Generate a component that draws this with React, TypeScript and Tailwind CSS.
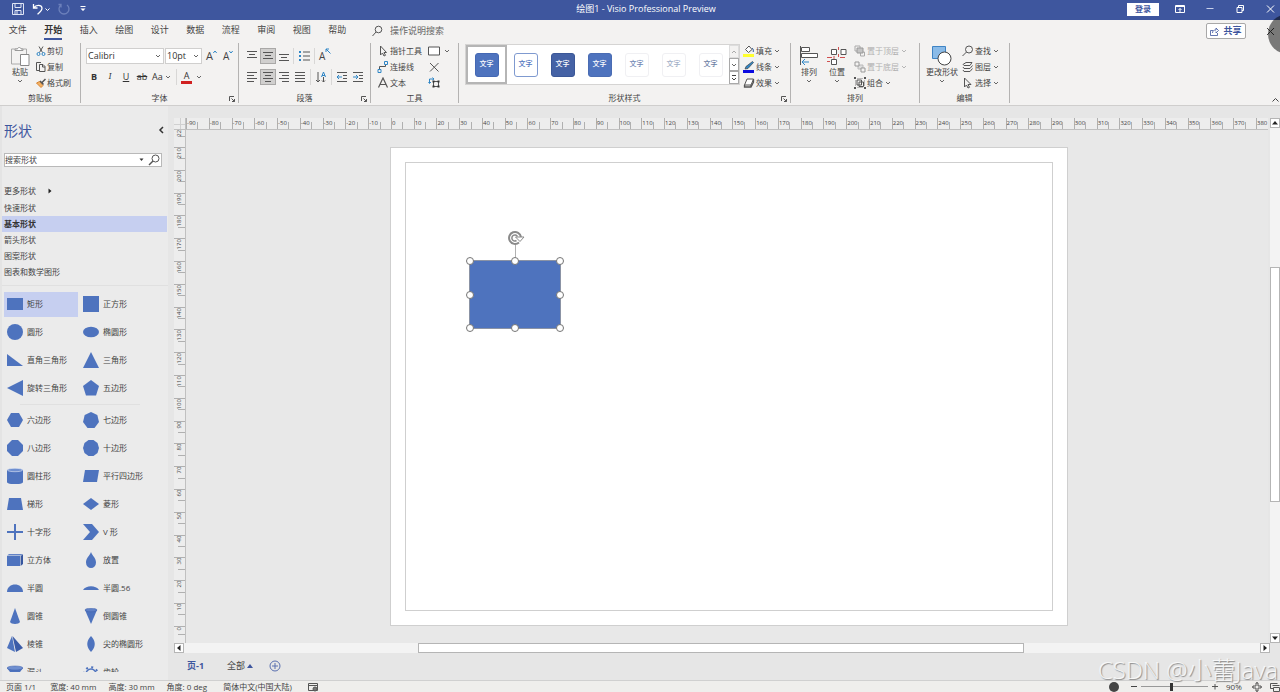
import React, { useState } from "react";
import clsx from "clsx";

const BLUE = "#4e73be";

const tabs = ["文件", "开始", "插入", "绘图", "设计", "数据", "流程", "审阅", "视图", "帮助"];

const stencils = ["快速形状", "基本形状", "箭头形状", "图案形状", "图表和数学图形"];

const swatches = [
  "bg-[#4e73be] text-white border-[#4468b4]",
  "bg-white text-[#4e73be] border-[#7f9ad0]",
  "bg-[#4562a5] text-white border-[#3b5797]",
  "bg-[#4e73be] text-white border-[#4a6cb3]",
  "bg-white text-[#6f86b4] border-[#f0f0f3]",
  "bg-white text-[#a0adc5] border-[#f0f0f3]",
  "bg-white text-[#6a7ca3] border-[#f0f0f3]",
];

type Shape = { name: string; art: React.ReactNode };

const mainShapes: Shape[] = [
  { name: "矩形", art: <path d="M0 2h16v12H0z" /> },
  { name: "正方形", art: <path d="M0 0h16v16H0z" /> },
  { name: "圆形", art: <circle cx="8" cy="8" r="8" /> },
  { name: "椭圆形", art: <ellipse cx="8" cy="8" rx="8" ry="5.3" /> },
  { name: "直角三角形", art: <path d="M0 2l16 12H0z" /> },
  { name: "三角形", art: <path d="M8 0l8 16H0z" /> },
  { name: "旋转三角形", art: <path d="M16 0v16L0 8z" /> },
  { name: "五边形", art: <path d="M8 0l8 6-3 9.500H3L0 6z" /> },
];

const moreShapes: Shape[] = [
  { name: "六边形", art: <path d="M4 1h8l4 7-4 7H4L0 8z" /> },
  { name: "七边形", art: <path d="M8 0l6.300 3L16 10l-4.500 6h-7L0 10l1.700-7z" /> },
  { name: "八边形", art: <path d="M5 0h6l5 5v6l-5 5H5l-5-5V5z" /> },
  { name: "十边形", art: <path d="M5.500 0h5L14.500 3 16 8l-1.500 5-4 3h-5l-4-3L0 8l1.500-5z" /> },
  {
    name: "圆柱形",
    art: (
      <>
        <path d="M0 2v12c0 3 16 3 16 0V2z" />
        <ellipse cx="8" cy="2" rx="7.700" ry="1.700" fill="#6f8fd0" stroke="#dfe5f3" strokeWidth=".6" />
      </>
    ),
  },
  { name: "平行四边形", art: <path d="M2 2h14l-2 12H0z" /> },
  { name: "梯形", art: <path d="M2 2h12l2 12H0z" /> },
  { name: "菱形", art: <path d="M8 2l8 6-8 6-8-6z" /> },
  { name: "十字形", art: <path d="M7 0h2v7h7v2H9v7H7V9H0V7h7z" /> },
  { name: "V 形", art: <path d="M0 0h9l7 8-7 8H0l7-8z" /> },
  {
    name: "立方体",
    art: (
      <>
        <path d="M0 4h13v10H0z" />
        <path d="M0 3.500L2 2h14l-2.500 1.500z" fill="#6383c6" />
        <path d="M13.600 4L16 2.300V12l-2.400 2z" fill="#36569f" />
      </>
    ),
  },
  { name: "放置", art: <path d="M8 0c1.500 4 5 6 5 10.500a5 5.500 0 0 1-10 0C3 6 6.500 4 8 0z" /> },
  { name: "半圆", art: <path d="M0 12c0-10 16-10 16 0z" /> },
  { name: "半圆.56", art: <path d="M0 10c3-5 13-5 16 0z" /> },
  { name: "圆锥", art: <path d="M8 0l5 14c-1 2.500-9 2.500-10 0z" /> },
  {
    name: "倒圆锥",
    art: (
      <>
        <path d="M2 2l6 14 6-14z" />
        <ellipse cx="8" cy="2" rx="6" ry="1.800" fill="#5f80c6" stroke="#3d5fab" strokeWidth=".5" />
      </>
    ),
  },
  {
    name: "棱锥",
    art: (
      <>
        <path d="M5 0L0 12l8 4z" />
        <path d="M5.500 0L9 16l7-4z" fill="#3b5ca8" />
      </>
    ),
  },
  { name: "尖的椭圆形", art: <path d="M8 0c5 5 5 11 0 16-5-5-5-11 0-16z" /> },
  {
    name: "漏斗",
    art: (
      <>
        <path d="M0 4l6 8h4l6-8z" />
        <ellipse cx="8" cy="4" rx="8" ry="2" fill="#6f8fd0" stroke="#3d5fab" strokeWidth=".5" />
      </>
    ),
  },
  {
    name: "齿轮",
    art: (
      <g fill="none" stroke={BLUE}>
        <circle cx="8" cy="10" r="5" strokeWidth="1.500" />
        <circle cx="8" cy="10" r="6.800" strokeWidth="2" strokeDasharray="2 3.340" />
      </g>
    ),
  },
];

function Svg({ size = 12, children }: { size?: number; children: React.ReactNode }) {
  return (
    <svg
      width={size}
      height={size}
      viewBox={`0 0 ${size} ${size}`}
      fill="none"
      stroke="#555"
      strokeWidth="1"
      className="shrink-0"
      aria-hidden="true"
    >
      {children}
    </svg>
  );
}

function Chevron({ light }: { light?: boolean }) {
  return (
    <svg width="6" height="6" viewBox="0 0 6 6" fill="none" stroke={light ? "#b5b5b5" : "#666"} className="shrink-0">
      <path d="M1 2l2 2 2-2" />
    </svg>
  );
}

function Divider() {
  return <span className="h-4 w-px bg-[#d8d7d6]" />;
}

function Group({
  label,
  className,
  launcher,
  children,
}: {
  label: string;
  className: string;
  launcher?: boolean;
  children: React.ReactNode;
}) {
  return (
    <section className={clsx("relative flex shrink-0 flex-col border-r border-[#b4b3b2]", className)}>
      <div className="flex h-12 shrink-0">{children}</div>
      <h2 className="text-center text-[8px] leading-[14px] text-[#444]">{label}</h2>
      {launcher && (
        <button aria-label={`${label}设置`} className="absolute right-0.5 bottom-0">
          <Svg size={8}>
            <path d="M1.500 6V1.500H6M3.500 3.500L6.500 6.500M6.500 4v2.500H4" />
          </Svg>
        </button>
      )}
    </section>
  );
}

function RowButton({
  icon,
  label,
  chevron,
  disabled,
}: {
  icon: React.ReactNode;
  label: string;
  chevron?: boolean;
  disabled?: boolean;
}) {
  return (
    <button
      disabled={disabled}
      className={clsx("flex h-4 items-center whitespace-nowrap", disabled ? "text-[#b0b0b0]" : "text-[#444]")}
    >
      {icon}
      <span className="ml-px">{label}</span>
      {chevron && (
        <span className="ml-0.5">
          <Chevron light={disabled} />
        </span>
      )}
    </button>
  );
}

function BigButton({ icon, label }: { icon: React.ReactNode; label: string }) {
  return (
    <button className="flex flex-col items-center whitespace-nowrap text-[#444]">
      {icon}
      <span className="leading-3">{label}</span>
      <Chevron />
    </button>
  );
}

function IconButton({ label, active, children }: { label: string; active?: boolean; children: React.ReactNode }) {
  return (
    <button
      aria-label={label}
      className={clsx("flex size-4 items-center justify-center", active && "border border-[#a9a8a7] bg-[#d0cfce]")}
    >
      {children}
    </button>
  );
}

// lines of text, each given as [x1, x2]
function Lines({ rows, top = 1 }: { rows: number[][]; top?: number }) {
  return (
    <Svg size={12}>
      {rows.map(([a, b], i) => (
        <path key={i} d={`M${a} ${top + 0.5 + i * 3}H${b}`} />
      ))}
    </Svg>
  );
}

function TitleBar() {
  return (
    <header className="flex h-5 shrink-0 items-center bg-[#3e569e] pb-0.5 text-[9px] text-white">
      <div className="flex flex-1 items-center pl-3">
        <button aria-label="保存">
          <svg width="12" height="12" viewBox="0 0 12 12" fill="none" stroke="#dfe5f5">
            <path d="M.5.500h11v11H.500zM3 .500v4h6v-4M3 11.500V7.500h6v4M5 8v3" />
          </svg>
        </button>
        <button aria-label="撤消" className="ml-2 flex items-center gap-px">
          <svg width="12" height="12" viewBox="0 0 12 12" fill="none" stroke="#fff" strokeWidth="1.300">
            <path d="M1.500 1v4h4M1.700 4.800C4 1.500 9.500 1.500 10 5c.2 2.500-2 4-4.500 6.200" />
          </svg>
          <svg width="5" height="5" viewBox="0 0 5 5" fill="none" stroke="#fff">
            <path d="M.5 1.500l2 2 2-2" />
          </svg>
        </button>
        <button aria-label="重复" className="ml-2">
          <svg width="12" height="12" viewBox="0 0 12 12" fill="none" stroke="#6c80bb" strokeWidth="1.300">
            <path d="M3 2a5 5 0 1 0 6 0M3 4.500V1.500H.500" />
          </svg>
        </button>
        <button aria-label="自定义快速访问工具栏" className="ml-2.5">
          <svg width="6" height="6" viewBox="0 0 6 6" fill="#fff">
            <path d="M.5 0h5v1h-5zM.5 2.500h5L3 5z" />
          </svg>
        </button>
      </div>
      <h1>绘图1 - Visio Professional Preview</h1>
      <div className="flex flex-1 items-center justify-end">
        <button className="h-[13px] w-8 bg-white text-[8px] leading-3 font-bold text-[#3e569e]">登录</button>
        <button aria-label="功能区显示选项" className="ml-4">
          <svg width="10" height="10" viewBox="0 0 10 10" fill="none" stroke="#fff">
            <path d="M.5 1.500h9v7h-9zM.5 2.500h9M5 8V4.500M3.500 6L5 4.500 6.500 6" />
          </svg>
        </button>
        <button aria-label="最小化" className="ml-5">
          <svg width="10" height="10" viewBox="0 0 10 10" stroke="#c9d1ea">
            <path d="M1.500 4.500h7" />
          </svg>
        </button>
        <button aria-label="还原" className="ml-5">
          <svg width="10" height="10" viewBox="0 0 10 10" fill="none" stroke="#fff">
            <path d="M2 3.500h5v5H2zM3.500 3.500v-2h5v5H7" />
          </svg>
        </button>
        <button aria-label="关闭" className="mr-[5px] ml-5">
          <svg width="10" height="10" viewBox="0 0 10 10" stroke="#fff">
            <path d="M2 1.500l7 7M9 1.500l-7 7" />
          </svg>
        </button>
      </div>
    </header>
  );
}

function TabStrip() {
  const [active, setActive] = useState("开始");
  return (
    <nav className="flex h-[22px] shrink-0 items-center text-[9px] text-[#444]">
      <div className="flex w-[355px]">
        {tabs.map((t) => (
          <button key={t} onClick={() => setActive(t)} className="flex flex-1 justify-center">
            <span
              className={clsx(
                "border-b-2 leading-4",
                t === active ? "border-[#3e569e] font-bold text-[#333]" : "border-transparent"
              )}
            >
              {t}
            </span>
          </button>
        ))}
      </div>
      <label htmlFor="tell-me" className="ml-4">
        <Svg size={12}>
          <circle cx="7.500" cy="4.500" r="3.300" />
          <path d="M5 7L1.500 11" />
        </Svg>
      </label>
      <input
        id="tell-me"
        aria-label="操作说明搜索"
        placeholder="操作说明搜索"
        className="ml-[7px] w-24 bg-transparent leading-4 outline-none placeholder:text-[#666]"
      />
      <button className="ml-auto flex h-4 w-10 items-center justify-center gap-1 rounded-xs border border-[#a8a8a8] bg-white font-bold text-[#3e569e]">
        <svg width="9" height="9" viewBox="0 0 9 9" fill="none" stroke="#3e569e">
          <path d="M3 3.500H.500v5h7V6M2.500 6c0-2 1-3 3.500-3V1l2.500 2.500L6 6V4.500" strokeWidth=".8" />
        </svg>
        共享
      </button>
      <button aria-label="关闭窗格" className="mr-[5px] ml-5">
        <svg width="9" height="9" viewBox="0 0 9 9" stroke="#444">
          <path d="M1 1l7 7M8 1L1 8" />
        </svg>
      </button>
    </nav>
  );
}

function Combo({ label, value, className }: { label: string; value: string; className: string }) {
  return (
    <div className={clsx("relative flex h-4 items-center border border-[#d0cfce] bg-white", className)}>
      <select
        aria-label={label}
        className="h-full w-full appearance-none bg-transparent pl-px text-[9px] leading-[14px] text-[#333] outline-none"
      >
        <option>{value}</option>
      </select>
      <span className="pointer-events-none absolute right-0.5">
        <Chevron />
      </span>
    </div>
  );
}

function FontGroup() {
  return (
    <Group label="字体" className="w-[158px]" launcher>
      <div className="flex flex-1 flex-col gap-[5px] pt-[5px] pl-[5px]">
        <div className="flex h-4 items-center">
          <Combo label="字体" value="Calibri" className="w-[78px]" />
          <Combo label="字号" value="10pt" className="ml-px w-[37px]" />
          <button aria-label="增大字号" className="ml-1 flex items-start text-[11px] leading-3 text-[#444]">
            A
            <svg width="4" height="4" viewBox="0 0 4 4" fill="none" stroke="#2f86c6">
              <path d="M.3 3L2 1l1.700 2" />
            </svg>
          </button>
          <button aria-label="减小字号" className="ml-1.5 flex items-start text-[10px] leading-3 text-[#444]">
            A
            <svg width="4" height="4" viewBox="0 0 4 4" fill="none" stroke="#2f86c6">
              <path d="M.3 1L2 3l1.700-2" />
            </svg>
          </button>
        </div>
        <div className="flex h-4 items-center text-[9px] text-[#333]">
          <button className="w-4 font-bold">B</button>
          <button className="w-4 font-serif italic">I</button>
          <button className="w-4 underline">U</button>
          <button className="w-4 line-through">ab</button>
          <button className="ml-0.5 flex w-6 items-center gap-0.5">
            Aa
            <Chevron />
          </button>
          <Divider />
          <button aria-label="字体颜色" className="ml-1 flex items-center gap-1">
            <span className="w-[11px] border-b-[3px] border-[#d02020] text-center leading-[10px]">A</span>
            <Chevron />
          </button>
        </div>
      </div>
    </Group>
  );
}

function ParagraphGroup() {
  return (
    <Group label="段落" className="w-[132px]" launcher>
      <div className="flex flex-1 flex-col gap-[5px] pt-[5px] pl-[5px]">
        <div className="flex h-4 items-center">
          <IconButton label="顶端对齐">
            <Lines rows={[[1, 11], [3, 9], [1, 11]]} />
          </IconButton>
          <IconButton label="中部对齐" active>
            <Lines rows={[[1, 11], [3, 9], [1, 11]]} top={2} />
          </IconButton>
          <IconButton label="底端对齐">
            <Lines rows={[[1, 11], [3, 9], [1, 11]]} top={4} />
          </IconButton>
          <span className="mr-0.5 ml-px flex">
            <Divider />
          </span>
          <IconButton label="项目符号">
            <Svg>
              <path d="M5 2h7M5 6h7M5 10h7" />
              <path d="M1 2h2M1 6h2M1 10h2" stroke="#2f86c6" strokeWidth="2" />
            </Svg>
          </IconButton>
          <span className="mr-1 ml-0.5 flex">
            <Divider />
          </span>
          <button aria-label="文字方向" className="flex items-start text-[10px] leading-4 text-[#444]">
            A
            <svg width="6" height="6" viewBox="0 0 6 6" fill="none" stroke="#2f86c6">
              <path d="M5.500 5.500L1 1M1 4V1h3" />
            </svg>
          </button>
        </div>
        <div className="flex h-4 items-center">
          <IconButton label="左对齐">
            <Lines rows={[[1, 11], [1, 8], [1, 11], [1, 8]]} />
          </IconButton>
          <IconButton label="居中" active>
            <Lines rows={[[1, 11], [3, 9], [1, 11], [3, 9]]} />
          </IconButton>
          <IconButton label="右对齐">
            <Lines rows={[[1, 11], [4, 11], [1, 11], [4, 11]]} />
          </IconButton>
          <IconButton label="两端对齐">
            <Lines rows={[[1, 11], [1, 11], [1, 11], [1, 11]]} />
          </IconButton>
          <span className="mx-0.5 flex">
            <Divider />
          </span>
          <IconButton label="旋转文本">
            <Svg>
              <path d="M3 1v10M1 9l2 2 2-2M8.500 11V6M7 9.500L8.500 11 10 9.500" />
              <path d="M6.500 6l2-5 2 5M7 4.500h3" stroke="#2f86c6" />
            </Svg>
          </IconButton>
          <span className="mx-0.5 flex">
            <Divider />
          </span>
          <IconButton label="减少缩进">
            <Svg>
              <path d="M1 1.500h10M7 4.500h4M7 7.500h4M1 10.500h10" />
              <path d="M6 6H1M3 4L1 6l2 2" stroke="#2f86c6" />
            </Svg>
          </IconButton>
          <IconButton label="增加缩进">
            <Svg>
              <path d="M1 1.500h10M7 4.500h4M7 7.500h4M1 10.500h10" />
              <path d="M1 6h5M4 4l2 2-2 2" stroke="#2f86c6" />
            </Svg>
          </IconButton>
        </div>
      </div>
    </Group>
  );
}

function Ribbon() {
  return (
    <div className="flex h-16 shrink-0 border-b border-[#cfcecd] pt-px pb-0.5 text-[8px] text-[#444]">
      <Group label="剪贴板" className="w-[81px]">
        <div className="flex gap-1.5 pl-2.5">
          <div className="pt-[3px]">
            <BigButton
              label="粘贴"
              icon={
                <Svg size={20}>
                  <path d="M7 3H1.500v15H10M7 3h6M13 3h3.500v5" stroke="#aaa" />
                  <path d="M5 4.500V3h2.500c0-2 3.500-2 3.500 0H13v1.500z" fill="#fff" stroke="#999" />
                  <path d="M10.500 8.500h8.500v11h-8.500z" fill="#fff" stroke="#888" />
                </Svg>
              }
            />
          </div>
          <div>
            <RowButton
              label="剪切"
              icon={
                <Svg size={10}>
                  <path d="M3 .5l3.500 6M7 .5L3.500 6.500" />
                  <circle cx="2.500" cy="8" r="1.500" stroke="#2f86c6" />
                  <circle cx="7.500" cy="8" r="1.500" stroke="#2f86c6" />
                </Svg>
              }
            />
            <RowButton
              label="复制"
              icon={
                <Svg size={10}>
                  <path d="M3 8.500H.500v-8H5" />
                  <path d="M3.500 2.500H7l2 2v5H3.500zM6.500 2.500V5H9" />
                </Svg>
              }
            />
            <RowButton
              label="格式刷"
              icon={
                <Svg size={10}>
                  <path d="M.5 5L5 9.500l2-2L3.500 3.500z" fill="#f3b266" stroke="#d98532" />
                  <path d="M4 3l3.500 3.500M6 4.500L9.500 1" strokeWidth="1.500" />
                </Svg>
              }
            />
          </div>
        </div>
      </Group>

      <FontGroup />
      <ParagraphGroup />

      <Group label="工具" className="w-[88px]">
        <div className="flex flex-1 gap-1.5 pl-1.5">
          <div>
            <RowButton
              label="指针工具"
              icon={
                <Svg>
                  <path d="M3.500 1v9l2-2 1.500 3 1.500-.7L7 7.500h2.500z" />
                </Svg>
              }
            />
            <RowButton
              label="连接线"
              icon={
                <Svg>
                  <path d="M2.500 8V5.500h6V4" />
                  <path d="M1 8.500h3v3H1zM7.500.500h3v3h-3z" stroke="#2f86c6" />
                </Svg>
              }
            />
            <RowButton
              label="文本"
              icon={
                <Svg>
                  <path d="M1.500 10.500L6 1l4.500 9.500M3 7.500h6" strokeWidth="1.200" />
                </Svg>
              }
            />
          </div>
          <div>
            <button aria-label="矩形" className="flex h-4 items-center gap-1">
              <Svg>
                <path d="M.5 2h11v8H.500z" fill="#fff" />
              </Svg>
              <Chevron />
            </button>
            <button aria-label="连接点" className="flex h-4 items-center">
              <Svg>
                <path d="M2 2l8.500 8.500M10.500 2L2 10.500" />
              </Svg>
            </button>
            <button aria-label="文本块" className="flex h-4 items-center">
              <Svg>
                <path d="M5.500 4.500h5v5h-5z" />
                <path d="M4.500 3.500h2v2h-2zM9.500 3.500h2v2h-2zM4.500 8.500h2v2h-2zM9.500 8.500h2v2h-2z" fill="#333" stroke="none" />
                <path d="M1.500 6V2h4M4.500.500L6 2 4.500 3M.5 5l1 1.500L3 5" stroke="#2f86c6" />
              </Svg>
            </button>
          </div>
        </div>
      </Group>

      <Group label="形状样式" className="w-[332px]" launcher>
        <div className="flex flex-1 pl-1.5">
          <div className="mt-px flex h-[41px] w-[275px] border border-[#d5d4d3] bg-white">
            <div className="flex flex-1">
              {swatches.map((s, i) => (
                <button
                  key={i}
                  className={clsx(
                    "flex flex-1 items-center justify-center",
                    i === 0 && "border-2 border-[#b5b5b5]"
                  )}
                >
                  <span
                    className={clsx(
                      "flex size-6 shrink-0 items-center justify-center rounded-[3px] border text-[7px] font-medium",
                      s
                    )}
                  >
                    文字
                  </span>
                </button>
              ))}
            </div>
            <div className="flex w-2.5 flex-col *:flex *:flex-1 *:items-center *:justify-center *:border *:border-[#a9a9a9]">
              <button aria-label="上一行" className="border-[#ddd]! bg-[#f3f2f1]">
                <svg width="6" height="6" viewBox="0 0 6 6" fill="none" stroke="#aaa">
                  <path d="M1 4l2-2 2 2" />
                </svg>
              </button>
              <button aria-label="下一行">
                <Chevron />
              </button>
              <button aria-label="其他">
                <svg width="6" height="6" viewBox="0 0 6 6" fill="none" stroke="#444">
                  <path d="M1 .5h4M1 3l2 2 2-2" />
                </svg>
              </button>
            </div>
          </div>
          <div className="ml-[3px]">
            <RowButton
              label="填充"
              chevron
              icon={
                <Svg>
                  <path d="M2.500 4.500L6 1l3 3.500L5.500 7.500z" fill="#fff" />
                  <path d="M9 3c1.500 1 1.500 2.500 1.200 4" stroke="#2b5797" />
                  <path d="M0 10.500h11" stroke="#ffff2e" strokeWidth="3" />
                </Svg>
              }
            />
            <RowButton
              label="线条"
              chevron
              icon={
                <Svg>
                  <path d="M2 8l1-2.500L9.500.500l1 1L5 7.500z" fill="#2f86c6" stroke="#444" strokeWidth=".7" />
                  <path d="M0 10.500h11" stroke="#0a0ae0" strokeWidth="3" />
                </Svg>
              }
            />
            <RowButton
              label="效果"
              chevron
              icon={
                <Svg>
                  <path d="M4 2h6.500L8 8H1.500z" fill="#fff" />
                  <path d="M1.500 8v2H8l2.500-5V2M8 8v2" strokeWidth="1.300" />
                </Svg>
              }
            />
          </div>
        </div>
      </Group>

      <Group label="排列" className="w-[129px]">
        <div className="flex flex-1 pl-2">
          <div className="w-5 pt-[3px]">
            <BigButton
              label="排列"
              icon={
                <Svg size={20}>
                  <path d="M1.500 0v19" />
                  <path d="M2.500 1.500h8v4h-8zM2.500 7.500h16v4h-16z" fill="#fff" />
                  <path d="M10 16H3M6 13l-3 3 3 3" stroke="#2f86c6" />
                </Svg>
              }
            />
          </div>
          <div className="ml-2 w-5 pt-[3px]">
            <BigButton
              label="位置"
              icon={
                <Svg size={20}>
                  <path d="M4.500 3.500h5v5h-5zM14 3.500h5v5h-5zM4.500 13.500h5v5h-5z" fill="#fff" />
                  <path d="M11.500 1v3M11.500 8v3M7 10v3M0 11.500h5M13 11.500h5M0 15.500h3" stroke="#d05050" />
                </Svg>
              }
            />
          </div>
          <div className="ml-[7px]">
            <RowButton
              label="置于顶层"
              chevron
              disabled
              icon={
                <Svg>
                  <path d="M1 1h5v5H1zM6.500 7h4v4h-4z" stroke="#aaa" />
                  <path d="M3 3h6v5H3z" fill="#c4c4c4" stroke="#999" />
                </Svg>
              }
            />
            <RowButton
              label="置于底层"
              chevron
              disabled
              icon={
                <Svg>
                  <path d="M4 4h5v4H4z" fill="#ddd" stroke="#bbb" />
                  <path d="M1 1h4v4H1zM7 7h4v4H7z" fill="#f3f2f1" stroke="#999" />
                </Svg>
              }
            />
            <RowButton
              label="组合"
              chevron
              icon={
                <Svg>
                  <path d="M3 3h4.500v5H3zM5 5h4.500v4.500H5z" />
                  <path d="M1.500 3.500v5M10.500 3.500v5M3.500 1.500h5M3.500 10.500h5" strokeDasharray="1 1" strokeWidth=".7" />
                  <path d="M0 0h2v2H0zM10 0h2v2h-2zM0 10h2v2H0zM10 10h2v2h-2z" fill="#555" stroke="none" />
                </Svg>
              }
            />
          </div>
        </div>
      </Group>

      <Group label="编辑" className="w-[90px]">
        <div className="flex flex-1 gap-1 pl-1.5">
          <div className="pt-[3px]">
            <BigButton
              label="更改形状"
              icon={
                <Svg size={20}>
                  <path d="M.5.500h13v12H.500z" fill="#8abbe8" stroke="#3f84c4" />
                  <circle cx="12.500" cy="12.500" r="6.500" fill="#fff" stroke="#444" />
                </Svg>
              }
            />
          </div>
          <div>
            <RowButton
              label="查找"
              chevron
              icon={
                <Svg>
                  <circle cx="7" cy="4.500" r="3.500" />
                  <path d="M4.500 7L.500 11" />
                </Svg>
              }
            />
            <RowButton
              label="图层"
              chevron
              icon={
                <Svg>
                  <path d="M1 3.500L4 1.500h6L8 4.500H2zM1 6l1 1.500h6l2.500-3M1 9l1 1.500h6l2.500-3" />
                </Svg>
              }
            />
            <RowButton
              label="选择"
              chevron
              icon={
                <Svg>
                  <path d="M2.500 1v9l2-2 1.500 3 1.500-.7L6 7.500h3z" />
                </Svg>
              }
            />
          </div>
        </div>
      </Group>

      <button aria-label="折叠功能区" className="mt-auto mr-px ml-auto">
        <svg width="7" height="6" viewBox="0 0 7 6" fill="none" stroke="#444">
          <path d="M.5 4.500l3-3 3 3" />
        </svg>
      </button>
    </div>
  );
}

function ShapeGrid({ shapes, selected }: { shapes: Shape[]; selected?: string }) {
  return (
    <ul className="grid grid-cols-[76px_1fr]">
      {shapes.map((s) => (
        <li key={s.name} className="flex h-7 items-center">
          <button
            className={clsx(
              "flex h-[25px] w-[74px] items-center gap-1 pl-[3px] whitespace-nowrap",
              s.name === selected && "bg-[#c6cff0]"
            )}
          >
            <svg width="16" height="16" viewBox="0 0 16 16" fill={BLUE} className="shrink-0">
              {s.art}
            </svg>
            {s.name}
          </button>
        </li>
      ))}
    </ul>
  );
}

function ShapesPane() {
  const [active, setActive] = useState("基本形状");
  return (
    <aside className="flex w-[168px] shrink-0 flex-col overflow-hidden border-l-2 border-[#e4e4e4] bg-[#ebebeb] pt-3 text-[8px] text-[#444]">
      <div className="flex h-6 items-center justify-between pr-1 pl-0.5">
        <h2 className="text-[14px] text-[#3e569e]">形状</h2>
        <button aria-label="折叠形状窗格">
          <svg width="6" height="8" viewBox="0 0 6 8" fill="none" stroke="#333" strokeWidth="1.500">
            <path d="M5 1L2 4l3 3" />
          </svg>
        </button>
      </div>
      <div className="mt-[11px] mr-1.5 ml-0.5 flex h-[14px] items-center border border-[#b9b9b9] bg-white">
        <input
          aria-label="搜索形状"
          placeholder="搜索形状"
          className="w-full min-w-0 flex-1 leading-3 outline-none placeholder:text-[#444]"
        />
        <svg width="5" height="4" viewBox="0 0 5 4" fill="#333">
          <path d="M.5.500h4l-2 2.500z" />
        </svg>
        <button aria-label="搜索" className="mr-px ml-1">
          <Svg>
            <circle cx="7.500" cy="4.500" r="3.500" />
            <path d="M5 7L1 11" strokeWidth="1.500" />
          </Svg>
        </button>
      </div>
      <div className="mt-4 flex flex-col border-b border-[#e0e0e0] pb-[5px] *:h-4 *:text-left">
        <button className="mb-px flex items-center gap-3 pl-0.5">
          更多形状
          <svg width="4" height="6" viewBox="0 0 4 6" fill="#222">
            <path d="M.5.500l3 2.500-3 2.500z" />
          </svg>
        </button>
        {stencils.map((s) => (
          <button
            key={s}
            onClick={() => setActive(s)}
            className={clsx("mr-px pl-0.5", s === active && "bg-[#c6cff0] font-bold text-[#333]")}
          >
            {s}
          </button>
        ))}
      </div>
      <div className="mb-2 min-h-0 flex-1 overflow-hidden pt-1 pl-0.5">
        <ShapeGrid shapes={mainShapes} selected="矩形" />
        <hr className="mt-0.5 mb-px mr-7 ml-4 border-[#e0e0e0]" />
        <ShapeGrid shapes={moreShapes} />
      </div>
    </aside>
  );
}

function HorizontalRuler() {
  const marks = Array.from({ length: 48 }, (_, i) => (i - 9) * 10);
  return (
    <div className="flex h-3 min-w-0 flex-1 border-b border-[#c0c0c0] bg-[#ededed] text-[6px] leading-[11px] text-[#444]">
      {marks.map((m, i) => {
        const last = i === marks.length - 1;
        return (
          <div key={m} style={{ flexGrow: last ? 1 : 2 }} className="flex min-w-0 basis-0 items-end border-l border-[#b0b0b0]">
            <span className="w-0 flex-1 whitespace-nowrap">{m}</span>
            {!last && <span className="h-[7px] flex-1 border-l border-[#b0b0b0]" />}
          </div>
        );
      })}
    </div>
  );
}

function VerticalRuler() {
  const marks = Array.from({ length: 23 }, (_, i) => 220 - i * 10);
  return (
    <div className="flex w-3 shrink-0 flex-col overflow-hidden border-r border-[#c0c0c0] bg-[#ededed] text-[6px] leading-[11px] text-[#444]">
      {marks.map((m, i) => {
        const first = i === 0;
        const last = i === marks.length - 1;
        return (
          <div
            key={m}
            style={{ flexGrow: first ? 78 : last ? 74 : 100 }}
            className={clsx("flex min-h-0 basis-0 flex-col items-end", !first && "border-t border-[#b0b0b0]")}
          >
            <span
              className={clsx(
                "flex h-0 w-full rotate-180 justify-end [writing-mode:vertical-rl]",
                first ? "grow-[6]" : "flex-1"
              )}
            >
              {first ? 22 : m}
            </span>
            <span className={clsx("w-[7px] border-t border-[#b0b0b0]", first ? "h-0 grow-[11]" : "flex-1")} />
          </div>
        );
      })}
    </div>
  );
}

const handles = [
  "top-0 left-0",
  "top-0 left-1/2",
  "top-0 left-full",
  "top-1/2 left-0",
  "top-1/2 left-full",
  "top-full left-0",
  "top-full left-1/2",
  "top-full left-full",
];

function Canvas() {
  return (
    <main className="relative min-w-0 flex-1 overflow-hidden bg-[#e8e8e8]">
      <div className="absolute top-[17px] left-[204px] h-[479px] w-[678px] border border-[#cfcfcf] bg-white">
        <div className="absolute inset-[14px] border border-[#cfcfcf]" />
        <div className="absolute top-[112px] left-[78px] h-[69px] w-[92px] border border-[#8b93a5] bg-[#4e73be]">
          <span className="absolute bottom-full left-1/2 h-4 w-px bg-[#b0b0b0]" />
          <svg
            width="18"
            height="16"
            viewBox="0 0 18 16"
            fill="none"
            className="absolute -top-[31px] left-1/2 -translate-x-2"
          >
            <path d="M14 7A6 6 0 1 0 12 12.500" stroke="#8a8a8a" strokeWidth="2" />
            <path d="M10.500 6.500a3 3 0 1 0-1 4" stroke="#8a8a8a" strokeWidth="1.500" />
            <path d="M8.500 7h8.500l-4 4.500z" fill="#fff" stroke="#8a8a8a" />
          </svg>
          {handles.map((h) => (
            <span
              key={h}
              className={clsx(
                "absolute size-2 -translate-x-1/2 -translate-y-1/2 rounded-full border border-[#757575] bg-white",
                h
              )}
            />
          ))}
        </div>
      </div>
    </main>
  );
}

function Arrow({ d, label }: { d: string; label: string }) {
  return (
    <button aria-label={label} className="flex size-2.5 shrink-0 items-center justify-center border border-[#b5b5b5] bg-white">
      <svg width="6" height="6" viewBox="0 0 6 6" fill="#222">
        <path d={d} />
      </svg>
    </button>
  );
}

function Workspace() {
  return (
    <div className="flex min-w-0 flex-1 flex-col bg-[#e6e6e6] pt-3 pl-1.5">
      <div className="flex min-h-0 flex-1">
        <div className="flex min-w-0 flex-1 flex-col">
          <div className="flex">
            <div className="relative size-3 shrink-0 border-r border-b border-[#c0c0c0] bg-[#ededed]">
              <span className="absolute top-0 left-1.5 h-full w-px bg-[#d0d0d0]" />
              <span className="absolute top-1.5 left-0 h-px w-full bg-[#d0d0d0]" />
            </div>
            <HorizontalRuler />
          </div>
          <div className="flex min-h-0 flex-1">
            <VerticalRuler />
            <Canvas />
          </div>
        </div>
        <div className="ml-0.5 flex w-2.5 shrink-0 flex-col bg-[#f3f3f3]">
          <Arrow label="向上滚动" d="M0 4.500h6L3 1z" />
          <div className="flex-[139]" />
          <div className="flex-[233] border border-[#b5b5b5] bg-white" />
          <div className="flex-[131]" />
          <Arrow label="向下滚动" d="M0 1.500h6L3 5z" />
        </div>
      </div>
      <div className="mr-2.5 flex h-2.5 shrink-0 bg-[#f3f3f3]">
        <Arrow label="向左滚动" d="M4.500 0v6L1 3z" />
        <div className="flex-[234]" />
        <div className="flex-[604] border border-[#b5b5b5] bg-white" />
        <div className="flex-[236]" />
        <Arrow label="向右滚动" d="M1.500 0v6L5 3z" />
      </div>
      <div className="flex h-[27px] shrink-0 items-center border-b border-transparent pl-[13px] text-[9px] text-[#444]">
        <button className="font-bold text-[#3e569e]">页-1</button>
        <button className="ml-[23px] flex items-center gap-0.5">
          全部
          <svg width="6" height="4" viewBox="0 0 6 4" fill="#3e569e">
            <path d="M3 0l3 4H0z" />
          </svg>
        </button>
        <button aria-label="插入页" className="ml-4">
          <svg width="12" height="12" viewBox="0 0 12 12" fill="none" stroke="#5a70b0">
            <circle cx="6" cy="6" r="5" />
            <path d="M6 3v6M3 6h6" />
          </svg>
        </button>
      </div>
    </div>
  );
}

function StatusBar() {
  const [zoom, setZoom] = useState(46);
  return (
    <footer className="flex h-3 shrink-0 items-center border-t border-[#d0d0d0] bg-[#efeeec] pl-1.5 text-[8px] leading-3 whitespace-nowrap text-[#444]">
      <div className="flex items-center gap-3">
        <span className="mr-0.5">页面 1/1</span>
        <span>宽度: 40 mm</span>
        <span>高度: 30 mm</span>
        <span className="mr-1">角度: 0 deg</span>
        <span className="mr-1">简体中文(中国大陆)</span>
        <button aria-label="宏">
          <Svg size={10}>
            <path d="M.5 1.500h9v7h-9zM.5 3.500h9" />
            <circle cx="7" cy="7" r="2" fill="#777" />
          </Svg>
        </button>
      </div>
      <div className="ml-auto flex items-center">
        <span className="mr-3 size-2.5 rounded-full bg-[#444]" />
        <button aria-label="缩小" className="mr-1">
          <svg width="6" height="6" viewBox="0 0 6 6" stroke="#444">
            <path d="M0 2.500h6" />
          </svg>
        </button>
        <input
          type="range"
          aria-label="缩放"
          value={zoom}
          onChange={(e) => setZoom(Number(e.target.value))}
          className="h-2 w-[67px] appearance-none bg-transparent bg-[linear-gradient(#999,#999)] bg-[length:100%_1px] bg-center bg-no-repeat [&::-webkit-slider-thumb]:h-2 [&::-webkit-slider-thumb]:w-[3px] [&::-webkit-slider-thumb]:appearance-none [&::-webkit-slider-thumb]:bg-[#333]"
        />
        <button aria-label="放大" className="ml-1">
          <svg width="6" height="6" viewBox="0 0 6 6" stroke="#555">
            <path d="M0 2.500h6M3 0v5.500" />
          </svg>
        </button>
        <span className="ml-2 w-[26px]">90%</span>
        <button aria-label="调整页面以适合当前窗口">
          <Svg size={10}>
            <path d="M3 3h4v4H3z" />
            <path d="M5 0l1.500 1.500h-3zM5 10l1.500-1.500h-3zM0 5l1.500-1.500v3zM10 5L8.500 3.500v3z" fill="#555" strokeWidth=".5" />
          </Svg>
        </button>
        <button aria-label="切换窗口" className="ml-2">
          <Svg size={10}>
            <path d="M.5 1.500h7M.5 1.500v5H3M2.500 3.500h7M3.500 5.500h6v4h-6z" />
          </Svg>
        </button>
      </div>
    </footer>
  );
}

export default function App() {
  return (
    <div className="relative flex h-screen flex-col overflow-hidden bg-[#f3f2f1] font-['Open_Sans','Noto_Sans_CJK_SC',sans-serif]">
      <TitleBar />
      <TabStrip />
      <Ribbon />
      <div className="flex min-h-0 flex-1">
        <ShapesPane />
        <Workspace />
      </div>
      <StatusBar />
      <span className="pointer-events-none absolute top-3.5 -right-7 size-10 rounded-full bg-black/50" />
      <p className="pointer-events-none absolute right-0.5 bottom-2 text-[24px] leading-7 font-light text-white/80 [text-shadow:1px_1px_1px_#888]">
        CSDN @小蕾Java
      </p>
    </div>
  );
}
